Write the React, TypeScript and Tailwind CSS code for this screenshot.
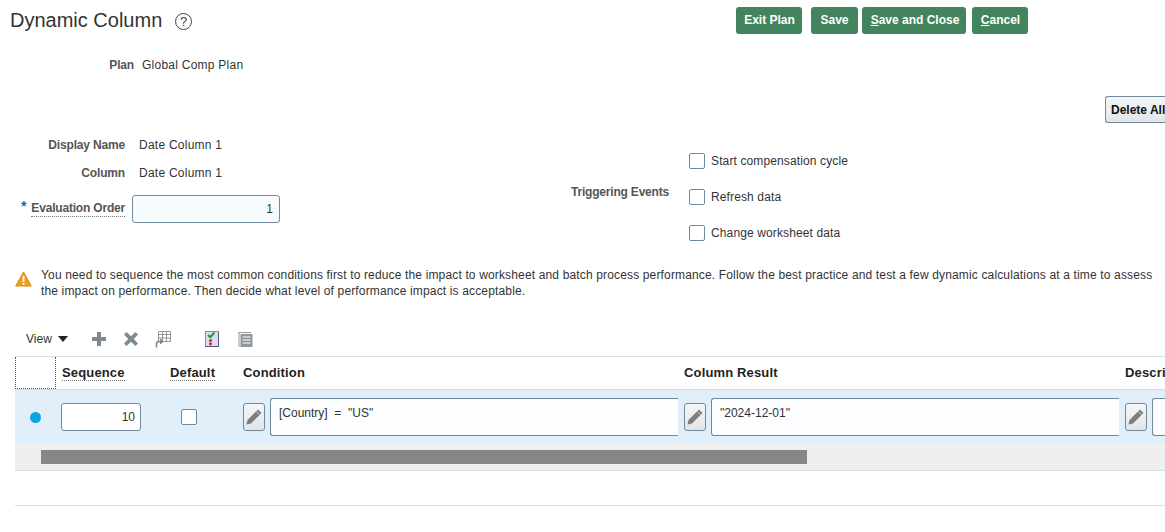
import { ReactNode } from "react";

function GreenButton({ children, className }: { children: ReactNode; className: string }) {
  return (
    <button className={`flex h-[27px] items-center justify-center rounded-[3px] bg-[#41845e] pb-[1px] text-[12px] font-bold text-white ${className}`}>
      {children}
    </button>
  );
}

function Checkbox({ label }: { label?: string }) {
  return (
    <div className="flex h-4 items-center">
      <span className="h-4 w-4 rounded-[2px] border border-[#6f8a9c] bg-white" />
      {label && <span className="ml-[6px] text-[12px] tracking-[0.125px] text-[#333333]">{label}</span>}
    </div>
  );
}

function PencilButton() {
  return (
    <button className="flex h-[28px] w-[22px] shrink-0 items-center justify-center rounded-[3px] border border-[#6f8a9c] bg-gradient-to-b from-[#f5f6f7] to-[#e2e5e8]">
      <svg width="18" height="18" viewBox="0 0 18 18">
        <path d="M13 1.5 L16.5 5 L6 15.5 L1.5 16.5 L2.5 12 Z" fill="#7d7d7d" />
        <path d="M11.2 3.5 L14.5 6.8" stroke="#e8eaec" strokeWidth="0.8" />
      </svg>
    </button>
  );
}

function ExpressionCell({ value, width }: { value?: string; width: string }) {
  return (
    <div className="flex items-center">
      <PencilButton />
      <div className={`ml-[5px] h-[38px] shrink-0 rounded-l-[3px] border border-r-0 border-[#6f8a9c] bg-[#fbfdff] pl-2 pt-[7px] text-[12px] leading-[14px] text-[#333333] ${width}`}>
        {value}
      </div>
    </div>
  );
}

export default function App() {
  return (
    <div className="h-[532px] w-[1165px] overflow-hidden bg-white font-['Liberation_Sans',Arial,sans-serif] text-[12px] text-[#333333]">
      {/* title and page actions */}
      <div className="flex h-[41px] items-start pt-[7px]">
        <h1 className="ml-[10px] w-[165px] text-[20px] leading-[26px] text-[#333333]">Dynamic Column</h1>
        <span className="mt-[6px] flex h-[17px] w-[17px] items-center justify-center rounded-full border border-[#444444] text-[13px] leading-none text-[#444444]">
          ?
        </span>
        <div className="ml-[544px] flex">
          <GreenButton className="w-[66px] pl-[1px]">Exit Plan</GreenButton>
          <GreenButton className="ml-[9px] w-[47px]">Save</GreenButton>
          <GreenButton className="ml-[4px] w-[104px] pl-[2px]">
            <span className="underline">S</span>ave and Close
          </GreenButton>
          <GreenButton className="ml-[6px] w-[56px] pl-[1px]">
            <span className="underline">C</span>ancel
          </GreenButton>
        </div>
      </div>

      <div className="mt-[17px] flex h-[14px] items-center">
        <span className="w-[134px] text-right font-bold tracking-[-0.17px] text-[#555555]">Plan</span>
        <span className="ml-2 tracking-[0.25px]">Global Comp Plan</span>
      </div>

      <div className="mt-[24px] flex justify-end">
        <button className="h-[27px] w-[60px] whitespace-nowrap rounded-l-[3px] border border-r-0 border-[#6f8a9c] bg-gradient-to-b from-[#f5f6f7] to-[#e2e5e8] pl-[5px] text-left text-[12px] font-bold text-[#111111]">
          Delete All
        </button>
      </div>

      {/* plan form */}
      <div className="mt-[14px] flex h-[115px]">
        <div className="w-[280px] shrink-0">
          <div className="flex h-[14px] items-center pt-[1px]">
            <span className="w-[125px] text-right font-bold tracking-[-0.17px] text-[#555555]">Display Name</span>
            <span className="ml-[14px] tracking-[0.25px]">Date Column 1</span>
          </div>
          <div className="mt-[14px] flex h-[14px] items-center pt-[1px]">
            <span className="w-[125px] text-right font-bold tracking-[-0.17px] text-[#555555]">Column</span>
            <span className="ml-[14px] tracking-[0.25px]">Date Column 1</span>
          </div>
          <div className="mt-[16px] flex items-center">
            <span className="ml-[21px] -mt-[6px] w-[10px] text-[14px] font-bold leading-none text-[#0b6fb8]">*</span>
            <span className="w-[94px] whitespace-nowrap border-b border-dotted border-[#777777] text-right font-bold leading-[15px] tracking-[-0.19px] text-[#555555]">
              Evaluation Order
            </span>
            <div className="ml-[7px] flex h-[28px] w-[148px] items-center justify-end rounded-[3px] border border-[#6f8a9c] bg-[#f8fbfe] pr-[6px] text-[12px]">
              1
            </div>
          </div>
        </div>
        <div className="flex w-[389px] shrink-0 items-start justify-end pt-[46px]">
          <span className="font-bold tracking-[-0.2px] text-[#555555]">Triggering Events</span>
        </div>
        <div className="ml-[20px] flex flex-col gap-5 pt-[16px]">
          <Checkbox label="Start compensation cycle" />
          <Checkbox label="Refresh data" />
          <Checkbox label="Change worksheet data" />
        </div>
      </div>

      {/* warning */}
      <div className="mt-[15px] flex pl-[15px]">
        <svg width="17" height="16" viewBox="0 0 17 16" className="mt-[4px] shrink-0">
          <path d="M8.5 1 L16.3 15 H0.7 Z" fill="#f0a020" stroke="#d88a10" strokeLinejoin="round" />
          <rect x="7.6" y="5" width="1.8" height="6" fill="#ffffff" />
          <rect x="7.6" y="12" width="1.8" height="1.8" fill="#ffffff" />
        </svg>
        <p className="ml-[9px] w-[1120px] text-[12px] leading-[16px] tracking-[0.15px] text-[#333333]">
          You need to sequence the most common conditions first to reduce the impact to worksheet and batch process performance. Follow the best practice and test a few dynamic calculations at a time to assess the impact on performance. Then decide what level of performance impact is acceptable.
        </p>
      </div>

      {/* toolbar */}
      <div className="mt-[24px] flex h-[32px] items-center pl-[26px]">
        <span className="text-[12px]">View</span>
        <svg width="10" height="6" viewBox="0 0 10 6" className="ml-[6px]">
          <path d="M0 0 H10 L5 6 Z" fill="#222222" />
        </svg>
        <svg width="16" height="16" viewBox="0 0 16 16" className="ml-[23px]">
          <path d="M6 1 H10 V6 H15 V10 H10 V15 H6 V10 H1 V6 H6 Z" fill="#7f8a90" />
        </svg>
        <svg width="16" height="16" viewBox="0 0 16 16" className="ml-[16px]">
          <path d="M3.5 1 L8 5.2 L12.5 1 L15 3.5 L10.8 8 L15 12.5 L12.5 15 L8 10.8 L3.5 15 L1 12.5 L5.2 8 L1 3.5 Z" fill="#7f8a90" />
        </svg>
        <svg width="16" height="17" viewBox="0 0 16 17" className="ml-[16px]">
          <path d="M3.5 0.5 H15.5 V10.5 H3.5 Z M3.5 3.5 H15.5 M3.5 7 H15.5 M7.5 0.5 V10.5 M11.5 0.5 V10.5" fill="#ffffff" stroke="#8e979c" strokeWidth="1" />
          <path d="M1.5 16.5 V13 C1.5 11.5 2.5 10.5 4 10.5 H6" fill="none" stroke="#7f8a90" strokeWidth="1.6" />
          <path d="M5 7.5 L9 10.5 L5 13.5 Z" fill="#7f8a90" />
        </svg>
        <svg width="14" height="16" viewBox="0 0 14 16" className="ml-[34px]">
          <rect x="0.5" y="0.5" width="13" height="15" fill="#dcdcf4" stroke="#8a8aac" />
          <path d="M13.5 1 V15.5 H1" fill="none" stroke="#55557a" />
          <path d="M3 4 L5.2 6.2 L9.5 1.5" fill="none" stroke="#2a9a2a" strokeWidth="2" />
          <circle cx="5.5" cy="9.5" r="1.6" fill="#d83030" />
          <circle cx="5.5" cy="12.8" r="1.6" fill="#d83030" />
        </svg>
        <svg width="15" height="15" viewBox="0 0 15 15" className="ml-[19px]">
          <path d="M0.5 0.5 H13 M1 0.5 V15" stroke="#8e979c" fill="none" />
          <rect x="2.5" y="2" width="12" height="13" fill="#8e979c" />
          <path d="M4.5 5 H12.5 M4.5 8 H12.5 M4.5 11 H12.5" stroke="#ffffff" />
        </svg>
      </div>

      {/* table */}
      <div className="ml-[15px] mt-[1px] border-t border-[#d9e1e7]">
        <div className="flex h-[32px] items-center text-[13px] font-bold tracking-[0.15px] text-[#1f1f1f]">
          <div className="h-full w-[41px] shrink-0 border-r border-b border-l border-dotted border-[#555555]" />
          <div className="w-[90px] shrink-0 pl-[6px]">
            <span className="border-b border-dotted border-[#777777]">Sequence</span>
          </div>
          <div className="w-[91px] shrink-0 pl-[24px]">
            <span className="border-b border-dotted border-[#777777]">Default</span>
          </div>
          <div className="w-[441px] shrink-0 pl-[6px]">Condition</div>
          <div className="w-[441px] shrink-0 pl-[6px]">Column Result</div>
          <div className="whitespace-nowrap pl-[6px]">Description</div>
        </div>
        <div className="flex h-[55px] items-center overflow-hidden border-t border-[#cfdde9] bg-[#e1effb]">
          <div className="flex w-[41px] shrink-0 justify-center">
            <span className="h-[11px] w-[11px] rounded-full bg-[#06a5e5]" />
          </div>
          <div className="flex w-[90px] shrink-0 pl-[5px]">
            <div className="flex h-[28px] w-[80px] items-center justify-end rounded-[3px] border border-[#6f8a9c] bg-white pr-[5px] text-[12px]">
              10
            </div>
          </div>
          <div className="flex w-[91px] shrink-0 pl-[35px]">
            <Checkbox />
          </div>
          <div className="w-[441px] shrink-0 pl-[6px]">
            <ExpressionCell value={'[Country]  =  "US"'} width="w-[408px] whitespace-pre" />
          </div>
          <div className="w-[441px] shrink-0 pl-[6px]">
            <ExpressionCell value={'"2024-12-01"'} width="w-[408px]" />
          </div>
          <div className="shrink-0 pl-[6px]">
            <ExpressionCell width="w-[40px]" />
          </div>
        </div>
        <div className="h-[27px] border-b border-[#d9e1e7] bg-[#efefef] pl-[26px] pt-[6px]">
          <div className="h-[14px] w-[766px] bg-[#868686]" />
        </div>
        <div className="h-[35px] border-b border-[#d9e1e7]" />
      </div>
    </div>
  );
}
